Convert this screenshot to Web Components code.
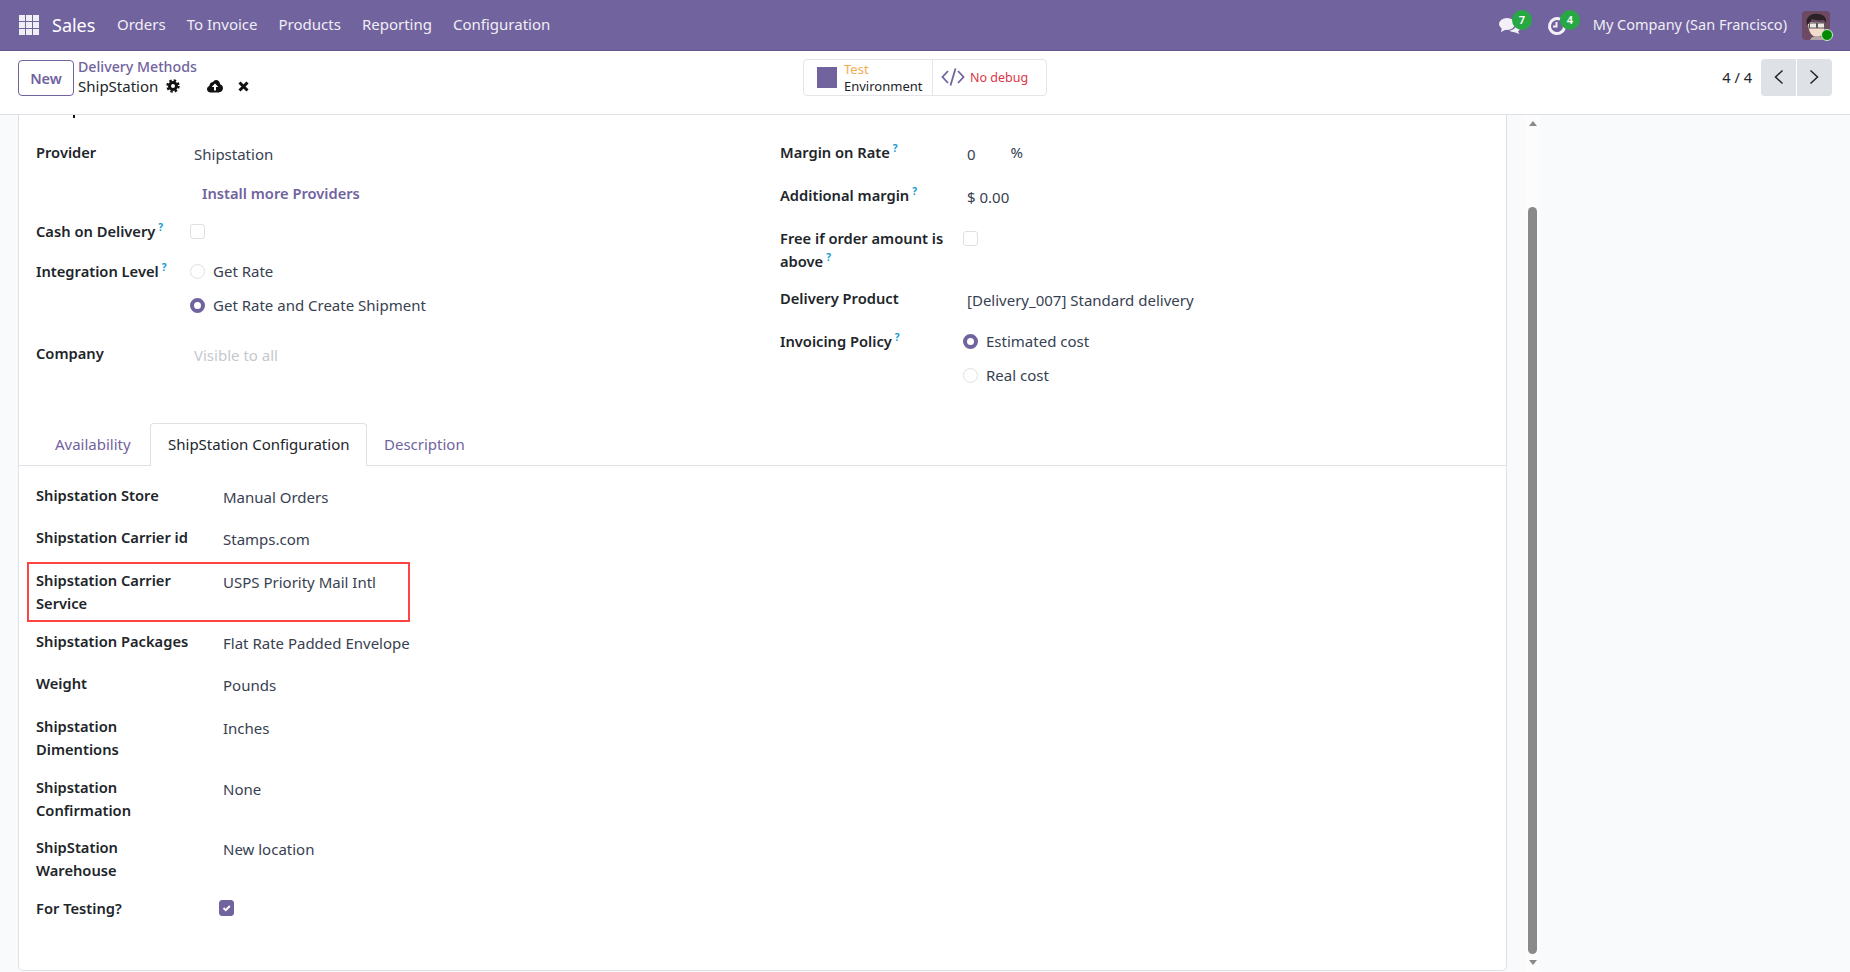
<!DOCTYPE html>
<html lang="en">
<head>
<meta charset="utf-8">
<title>ShipStation - Delivery Methods</title>
<style>
  html, body { margin: 0; height: 100%; overflow: hidden; }
  body {
    font-family: "Noto Sans", "Open Sans", sans-serif;
    font-size: 15px;
    line-height: 23px;
    color: #374151;
    background: #f9fafb;
  }
</style>
</head>
<body>
<sales-app></sales-app>

<script>
/** Base class: renders a shadow root once from _template() */
class OElement extends HTMLElement {
  constructor() {
    super();
    this.attachShadow({ mode: 'open' });
  }

  connectedCallback() {
    this.shadowRoot.innerHTML = this._template();
  }
}

class AppNavbar extends OElement {
  _template() {
    return `
      <style>
        :host { display: flex; align-items: center; height: 50px; flex: none; background: #71639e; border-bottom: 1px solid #5f5389; color: #fff; }
        .apps { display: grid; grid-template-columns: repeat(3, 6px); grid-auto-rows: 6px; gap: 1px; margin-left: 19px; }
        .apps i { background: #f1eff6; }
        .brand { font-size: 18px; margin-left: 13px; width: 65px; }
        nav { display: flex; gap: 21px; margin-top: -2px; font-size: 15px; color: #f0eef5; }
        .right { display: flex; align-items: center; margin-left: auto; }
        .sys { position: relative; display: block; width: 48px; height: 30px; }
        .sys svg { position: absolute; left: 0; top: 7px; }
        .sys b { position: absolute; left: 13px; top: 0; width: 20px; height: 20px; border-radius: 50%; background: #28a745; font-size: 11px; line-height: 20px; text-align: center; font-weight: 600; }
        .company { font-size: 14.500px; color: #f0eef5; margin: -2px 0 0 1px; }
        .avatar { position: relative; width: 28px; height: 29px; margin: 0 20px 0 15px; }
        .avatar svg { display: block; border-radius: 4px; }
        .avatar u { position: absolute; right: -3px; bottom: -1px; width: 10px; height: 10px; border-radius: 50%; background: #008a00; border: 1px solid #d5e8d4; }
      </style>
      <div class="apps">${'<i></i>'.repeat(9)}</div>
      <div class="brand">Sales</div>
      <nav><span>Orders</span><span>To Invoice</span><span>Products</span><span>Reporting</span><span>Configuration</span></nav>
      <div class="right">
        <span class="sys">
          <svg width="22" height="18" viewBox="0 0 22 18" fill="#f3f1f7">
            <ellipse cx="8" cy="7" rx="8" ry="6"/><path d="M3 10 2 15l6-3z"/>
            <path d="M17 6.500c2.500 1 4 2.800 4 4.500 0 1.500-1 2.800-2 3.500l1.500 2.500-5-1.800c-2 0-4-.6-5-1.700 3.800-.2 7-2.600 6.500-7z"/>
          </svg>
          <b>7</b>
        </span>
        <span class="sys" style="margin-right:-3px">
          <svg width="20" height="20" viewBox="0 0 20 20" style="top:6px" fill="none" stroke="#f3f1f7" stroke-width="3">
            <path d="M13 3.200A7.500 7.500 0 1 0 17.500 10"/><path d="M9.500 6v4.500H6" stroke-width="2"/>
          </svg>
          <b>4</b>
        </span>
        <span class="company">My Company (San Francisco)</span>
        <span class="avatar">
          <svg width="28" height="29" viewBox="0 0 28 29">
            <rect width="28" height="29" fill="#6d4a63"/>
            <path d="M6 11c0 10 4 15 9 15s8-6 8-14z" fill="#f3dccb"/>
            <path d="M5 14C3 6 9 2 16 3c6 0 9 4 8 9l-2-3c-5 1-9 0-12-1-1 2-2 4-5 6z" fill="#2b2228"/>
            <path d="M8 29c1-3 4-4 7-4s7 1 9 4z" fill="#b5a8a6"/>
            <g fill="#ece9e4" stroke="#5b5654" stroke-width="1"><rect x="7.500" y="12" width="7" height="5"/><rect x="15.500" y="12" width="7" height="5"/></g>
          </svg>
          <u></u>
        </span>
      </div>
    `;
  }
}

class ControlPanel extends OElement {
  _template() {
    return `
      <style>
        :host { display: grid; grid-template-columns: 1fr auto 1fr; align-items: center; height: 52px; padding-bottom: 11px; flex: none; background: #fff; border-bottom: 1px solid #dee2e6; }
        .left { display: flex; align-items: center; padding-left: 18px; }
        .new { box-sizing: border-box; width: 56px; height: 36px; margin-top: 2px; border: 1px solid #71639e; border-radius: 4px; color: #71639e; font-weight: 600; font-size: 14.500px; line-height: 34px; text-align: center; }
        .crumbs { margin: -2px 0 0 4px; }
        .crumbs a { display: block; color: #71639e; font-size: 14.200px; line-height: 20px; font-weight: 500; }
        .cur { display: flex; align-items: center; height: 18px; font-size: 15px; color: #212529; }
        .cur svg { display: block; flex: none; }
        .env { display: flex; box-sizing: border-box; height: 37px; border: 1px solid #e3e5e8; border-radius: 4px; }
        .env > div { display: flex; align-items: center; }
        .e1 { width: 128px; border-right: 1px solid #e3e5e8; }
        .sq { width: 20px; height: 21px; background: #71639e; margin: 0 7px 0 13px; flex: none; }
        .lbl { font-size: 13px; line-height: 17px; color: #212529; margin-top: 2px; }
        .lbl em { display: block; font-style: normal; color: #f0ad4e; }
        .e2 { padding-left: 8px; width: 105px; }
        .e2 span { font-size: 12.500px; color: #dc3545; margin-left: 5px; }
        .right { display: flex; align-items: center; justify-content: flex-end; padding-right: 18px; }
        .count { font-size: 14.6px; color: #212529; margin-right: 9px; }
        .btn { width: 35px; height: 37px; background: #dee1e6; display: flex; align-items: center; justify-content: center; }
        .btn:first-of-type { border-radius: 4px 0 0 4px; margin-right: 1px; }
        .btn:last-child { border-radius: 0 4px 4px 0; }
      </style>
      <div class="left">
        <div class="new">New</div>
        <div class="crumbs">
          <a>Delivery Methods</a>
          <div class="cur">ShipStation
            <svg style="margin-left:8px" width="14" height="14" viewBox="0 0 14 14" fill="none" stroke="#111">
              <circle cx="7" cy="7" r="3.500" stroke-width="3"/>
              <circle cx="7" cy="7" r="5.600" stroke-width="2.200" stroke-dasharray="2.400 2"/>
            </svg>
            <svg style="margin-left:27px" width="16" height="13" viewBox="0 0 16 13">
              <path d="M3.500 12.500C1.500 12.500 0 11 0 9.200c0-1.500 1-2.700 2.300-3.100C2.500 3.600 4.200 2 6 2c.6-1.200 1.900-2 3-2 2.200 0 4 1.800 4.100 4.200 1.700.5 2.900 2 2.900 3.900 0 2.500-2 4.400-4.400 4.400z" fill="#111"/>
              <path d="M8 3.500 4.700 7H7v3.500h2V7h2.300z" fill="#fff"/>
            </svg>
            <svg style="margin-left:15px" width="11" height="11" viewBox="0 0 11 11" stroke="#111" stroke-width="3">
              <path d="M1.500 1.500l8 8M9.500 1.500l-8 8"/>
            </svg>
          </div>
        </div>
      </div>
      <div class="env">
        <div class="e1"><div class="sq"></div><div class="lbl"><em>Test</em>Environment</div></div>
        <div class="e2">
          <svg width="24" height="20" viewBox="0 0 24 20" fill="none" stroke="#71639e" stroke-width="1.800">
            <path d="M7 4 1.500 10 7 16M17 4l5.500 6-5.500 6"/><path d="M14.500 1.500 9.500 18.500"/>
          </svg>
          <span>No debug</span>
        </div>
      </div>
      <div class="right">
        <span class="count">4 / 4</span>
        <div class="btn"><svg width="11" height="16" viewBox="0 0 11 16" fill="none" stroke="#212529" stroke-width="1.500"><path d="M9.500 1.500 2.500 8l7 6.500"/></svg></div>
        <div class="btn"><svg width="11" height="16" viewBox="0 0 11 16" fill="none" stroke="#212529" stroke-width="1.500"><path d="M1.500 1.500 8.500 8l-7 6.500"/></svg></div>
      </div>
    `;
  }
}

/** One label + value line of the form. Height comes from the --h property. */
class FieldRow extends OElement {
  _template() {
    const help = this.hasAttribute('help') ? '<sup>?</sup>' : '';
    return `
      <style>
        :host { display: grid; grid-template-columns: var(--label-w, 158px) 1fr; min-height: var(--h, 40px); align-content: start; position: relative; }
        .label { font-weight: 600; font-size: 14.700px; color: #212529; white-space: nowrap; }
        sup { color: #0f9bd0; font-size: 10px; font-weight: 700; line-height: 0; vertical-align: 6px; margin-left: 3px; }
        .value { padding-top: 2px; }
        :host([highlight])::after { content: ""; position: absolute; left: -9px; top: -6.500px; width: 379px; height: 56px; border: 2px solid #f44; pointer-events: none; }
      </style>
      <div class="label">${this.getAttribute('label')}${help}</div>
      <div class="value"><slot></slot></div>
    `;
  }
}

class CheckBox extends OElement {
  _template() {
    const checked = this.hasAttribute('checked');
    return `
      <style>
        :host { display: block; box-sizing: border-box; width: 15px; height: 15px; margin: 2px 0 0 -4px; border-radius: 3px; border: 1px solid #dde0e4; background: #fff; }
        :host([checked]) { background: #71639e; border-color: #71639e; height: 16px; margin-top: 1px; }
        svg { display: block; margin: 2px 1px; }
      </style>
      ${checked ? '<svg width="11" height="10" viewBox="0 0 11 10" fill="none" stroke="#fff" stroke-width="2"><path d="M2.500 5 4.800 7.200 8.800 3"/></svg>' : ''}
    `;
  }
}

class RadioOption extends OElement {
  _template() {
    return `
      <style>
        :host { display: flex; align-items: center; height: 34px; margin-left: -4px; }
        :host(:first-child) { margin-top: -7px; }
        i { box-sizing: border-box; width: 15px; height: 15px; border-radius: 50%; border: 1px solid #dde0e4; margin-right: 8px; flex: none; }
        :host([checked]) i { border: 4.500px solid #71639e; }
      </style>
      <i></i><slot></slot>
    `;
  }
}

class TabBar extends OElement {
  _template() {
    return `
      <style>
        :host { display: flex; height: 43px; box-sizing: border-box; border-bottom: 1px solid #dee2e6; padding-left: 19px; font-size: 15px; }
        span { box-sizing: border-box; height: 43px; line-height: 41px; color: #71639e; border: 1px solid transparent; border-bottom: 0; white-space: nowrap; }
        .on { width: 217px; padding: 0 17px; color: #212529; background: #fff; border-color: #dee2e6; border-radius: 4px 4px 0 0; }
        .a { width: 112px; padding-left: 16px; }
        .d { padding-left: 16px; }
      </style>
      <span class="a">Availability</span><span class="on">ShipStation Configuration</span><span class="d">Description</span>
    `;
  }
}

class ScrollTrack extends OElement {
  _template() {
    return `
      <style>
        :host { display: flex; flex-direction: column; align-items: center; width: 15px; flex: none; background: #fcfcfc; margin-left: 18px; }
        .up, .down { width: 0; height: 0; border: 4.500px solid transparent; flex: none; }
        .up { border-top: 0; border-bottom: 5px solid #8a8a8a; margin-top: 6px; }
        .down { border-bottom: 0; border-top: 5px solid #8a8a8a; margin-top: 6px; }
        .thumb { width: 9px; height: 747px; margin-top: 81px; background: #8a8a8a; border-radius: 5px; flex: none; }
      </style>
      <div class="up"></div><div class="thumb"></div><div class="down"></div>
    `;
  }
}

class FormSheet extends OElement {
  _template() {
    return `
      <style>
        :host { display: block; position: relative; box-sizing: border-box; width: 1489px; margin: 0 0 1px 18px; flex: none; background: #fff; border: 1px solid #dee2e6; border-top: 0; border-radius: 0 0 5px 5px; color: #374151; }
        .tick { position: absolute; left: 54px; top: 0; width: 2px; height: 3px; background: #111; }
        .groups { display: grid; grid-template-columns: 744px 1fr; padding: 25.500px 0 0 17px; height: 282.500px; }
        .more { display: block; width: fit-content; margin: -1px 0 0 8px; color: #71639e; font-weight: 600; font-size: 14.700px; }
        .right { --label-w: 187px; }
        .placeholder { color: #c4c8ce; }
        .unit { margin-left: 35px; position: relative; top: -2px; }
        .panel { --label-w: 187px; padding: 18px 0 0 17px; }
      </style>
      <div class="tick"></div>
      <div class="groups">
        <div>
          <field-row label="Provider">Shipstation</field-row>
          <field-row label="" style="--h:39px"><a class="more">Install more Providers</a></field-row>
          <field-row label="Cash on Delivery" help><check-box></check-box></field-row>
          <field-row label="Integration Level" help style="--h:82px">
            <radio-option>Get Rate</radio-option>
            <radio-option checked>Get Rate and Create Shipment</radio-option>
          </field-row>
          <field-row label="Company"><span class="placeholder">Visible to all</span></field-row>
        </div>
        <div class="right">
          <field-row label="Margin on Rate" help style="--h:43px">0<span class="unit">%</span></field-row>
          <field-row label="Additional margin" help style="--h:43px">$ 0.00</field-row>
          <field-row label="Free if order amount is<br>above" help style="--h:60px"><check-box></check-box></field-row>
          <field-row label="Delivery Product" style="--h:43px">[Delivery_007] Standard delivery</field-row>
          <field-row label="Invoicing Policy" help>
            <radio-option checked>Estimated cost</radio-option>
            <radio-option>Real cost</radio-option>
          </field-row>
        </div>
      </div>
      <tab-bar></tab-bar>
      <div class="panel">
        <field-row label="Shipstation Store" style="--h:42px">Manual Orders</field-row>
        <field-row label="Shipstation Carrier id" style="--h:42.500px">Stamps.com</field-row>
        <field-row label="Shipstation Carrier<br>Service" highlight style="--h:61px">USPS Priority Mail Intl</field-row>
        <field-row label="Shipstation Packages" style="--h:42px">Flat Rate Padded Envelope</field-row>
        <field-row label="Weight" style="--h:43px">Pounds</field-row>
        <field-row label="Shipstation<br>Dimentions" style="--h:61px">Inches</field-row>
        <field-row label="Shipstation<br>Confirmation" style="--h:60px">None</field-row>
        <field-row label="ShipStation<br>Warehouse" style="--h:61px">New location</field-row>
        <field-row label="For Testing?"><check-box checked></check-box></field-row>
      </div>
    `;
  }
}

class SalesApp extends OElement {
  _template() {
    return `
      <style>
        :host { display: flex; flex-direction: column; height: 100vh; }
        .content { display: flex; flex: 1; min-height: 0; }
      </style>
      <app-navbar></app-navbar>
      <control-panel></control-panel>
      <div class="content">
        <form-sheet></form-sheet>
        <scroll-track></scroll-track>
      </div>
    `;
  }
}

customElements.define('app-navbar', AppNavbar);
customElements.define('control-panel', ControlPanel);
customElements.define('field-row', FieldRow);
customElements.define('check-box', CheckBox);
customElements.define('radio-option', RadioOption);
customElements.define('tab-bar', TabBar);
customElements.define('scroll-track', ScrollTrack);
customElements.define('form-sheet', FormSheet);
customElements.define('sales-app', SalesApp);
</script>
</body>
</html>
